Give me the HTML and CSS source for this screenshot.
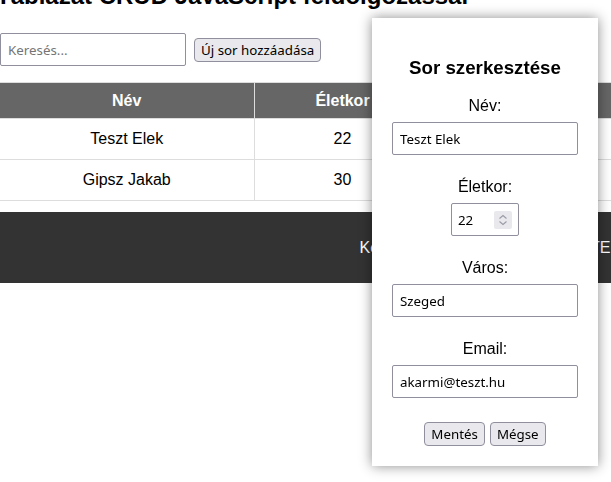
FILE: index.html
```html
<!DOCTYPE html>
<html lang="hu">
<head>
<meta charset="utf-8">
<title>Táblázat CRUD</title>
<link rel="stylesheet" href="styles.css">
</head>
<body>
<div class="page">
  <h1 class="title">Táblázat CRUD JavaScript feldolgozással</h1>
  <div class="toolbar">
    <input class="field-input" type="text" placeholder="Keresés...">
    <button class="btn" type="button">Új sor hozzáadása</button>
  </div>
  <table class="data">
    <colgroup>
      <col class="col-name"><col class="col-age"><col class="col-city">
    </colgroup>
    <thead>
      <tr><th>Név</th><th>Életkor</th><th>Város</th></tr>
    </thead>
    <tbody>
      <tr><td>Teszt Elek</td><td>22</td><td>Szeged</td></tr>
      <tr><td>Gipsz Jakab</td><td>30</td><td>Budapest</td></tr>
    </tbody>
  </table>
  <footer class="footer">Készítette: Kiss Anna, 2024 - SZTE</footer>
</div>

<div class="modal">
  <h3 class="modal-title">Sor szerkesztése</h3>
  <div class="field">
    <label for="f-name">Név:</label>
    <input id="f-name" class="field-input" type="text" value="Teszt Elek">
  </div>
  <div class="field">
    <label for="f-age">Életkor:</label>
    <div class="num">
      <input id="f-age" class="num-input" type="text" value="22">
      <span class="spin">
        <svg width="18" height="18" viewBox="0 0 18 18" aria-hidden="true">
          <polyline points="5.5,7.5 9,4.5 12.5,7.5" fill="none" stroke="#9a9aa6" stroke-width="1.1"/>
          <polyline points="5.5,10.5 9,13.5 12.5,10.5" fill="none" stroke="#9a9aa6" stroke-width="1.1"/>
        </svg>
      </span>
    </div>
  </div>
  <div class="field">
    <label for="f-city">Város:</label>
    <input id="f-city" class="field-input" type="text" value="Szeged">
  </div>
  <div class="field">
    <label for="f-email">Email:</label>
    <input id="f-email" class="field-input" type="text" value="akarmi@teszt.hu">
  </div>
  <div class="actions">
    <button class="btn" type="button">Mentés</button>
    <button class="btn" type="button">Mégse</button>
  </div>
</div>
</body>
</html>
```
FILE: styles.css
```css
html, body {
  margin: 0;
  overflow: hidden;
}
body {
  font-family: "Liberation Sans", Arial, sans-serif;
  font-size: 16px;
  color: #000;
  background: #fff;
}
.page {
  margin-top: -18px;
}
.title {
  font-size: 24px;
  font-weight: bold;
  line-height: 28px;
  margin: 0 0 23px -4px;
}
.toolbar {
  display: flex;
  align-items: center;
  gap: 8px;
  margin-bottom: 16px;
}
.field-input {
  box-sizing: border-box;
  width: 186px;
  height: 33px;
  padding: 0 7px;
  border: 1px solid #8f8f9d;
  border-radius: 2px;
  font: 13.333px "Noto Sans", sans-serif;
  color: #000;
  background: #fff;
}
.field-input::placeholder {
  color: #757575;
}
.btn {
  font: 13.333px "Noto Sans", sans-serif;
  line-height: 18px;
  padding: 2px 6px;
  border: 1px solid #8f8f9d;
  border-radius: 4px;
  background: #e9e9ed;
  color: #000;
}
.data {
  width: 100%;
  border-collapse: collapse;
  table-layout: fixed;
}
.col-name { width: 254px; }
.col-age { width: 177px; }
.data th,
.data td {
  border: 1px solid #ddd;
  text-align: center;
}
.data th:first-child,
.data td:first-child {
  border-left: 0;
}
.data th:last-child,
.data td:last-child {
  border-right: 0;
}
.data th {
  background: #666;
  color: #fff;
  font-weight: bold;
  padding: 8px;
  line-height: 19px;
}
.data td {
  padding: 11px 8px;
}
.footer {
  margin-top: 11px;
  background: #333;
  color: #fff;
  text-align: center;
  padding: 26px 0 26px 359px;
  line-height: 19px;
}
.modal {
  position: fixed;
  top: 18px;
  left: 372px;
  width: 186px;
  padding: 20px;
  background: #fff;
  box-shadow: 0 0 12px rgba(0, 0, 0, 0.45);
  text-align: center;
}
.modal-title {
  font-size: 18.72px;
  font-weight: bold;
  margin: 18.72px 0;
}
.field {
  display: flex;
  flex-direction: column;
  align-items: center;
  gap: 7px;
  margin-bottom: 23px;
}
.field label {
  line-height: 18px;
}
.num {
  box-sizing: border-box;
  width: 68px;
  height: 33px;
  display: flex;
  align-items: center;
  gap: 4px;
  padding: 0 6px;
  border: 1px solid #8f8f9d;
  border-radius: 2px;
}
.num-input {
  flex: 1;
  min-width: 0;
  border: 0;
  padding: 0;
  outline: none;
  background: transparent;
  font: 13.333px "Noto Sans", sans-serif;
  color: #000;
}
.spin {
  display: flex;
  width: 18px;
  height: 18px;
  background: #e9e9ed;
  border-radius: 2px;
}
.actions {
  display: flex;
  justify-content: center;
  gap: 5px;
  margin-top: 24px;
}
```
